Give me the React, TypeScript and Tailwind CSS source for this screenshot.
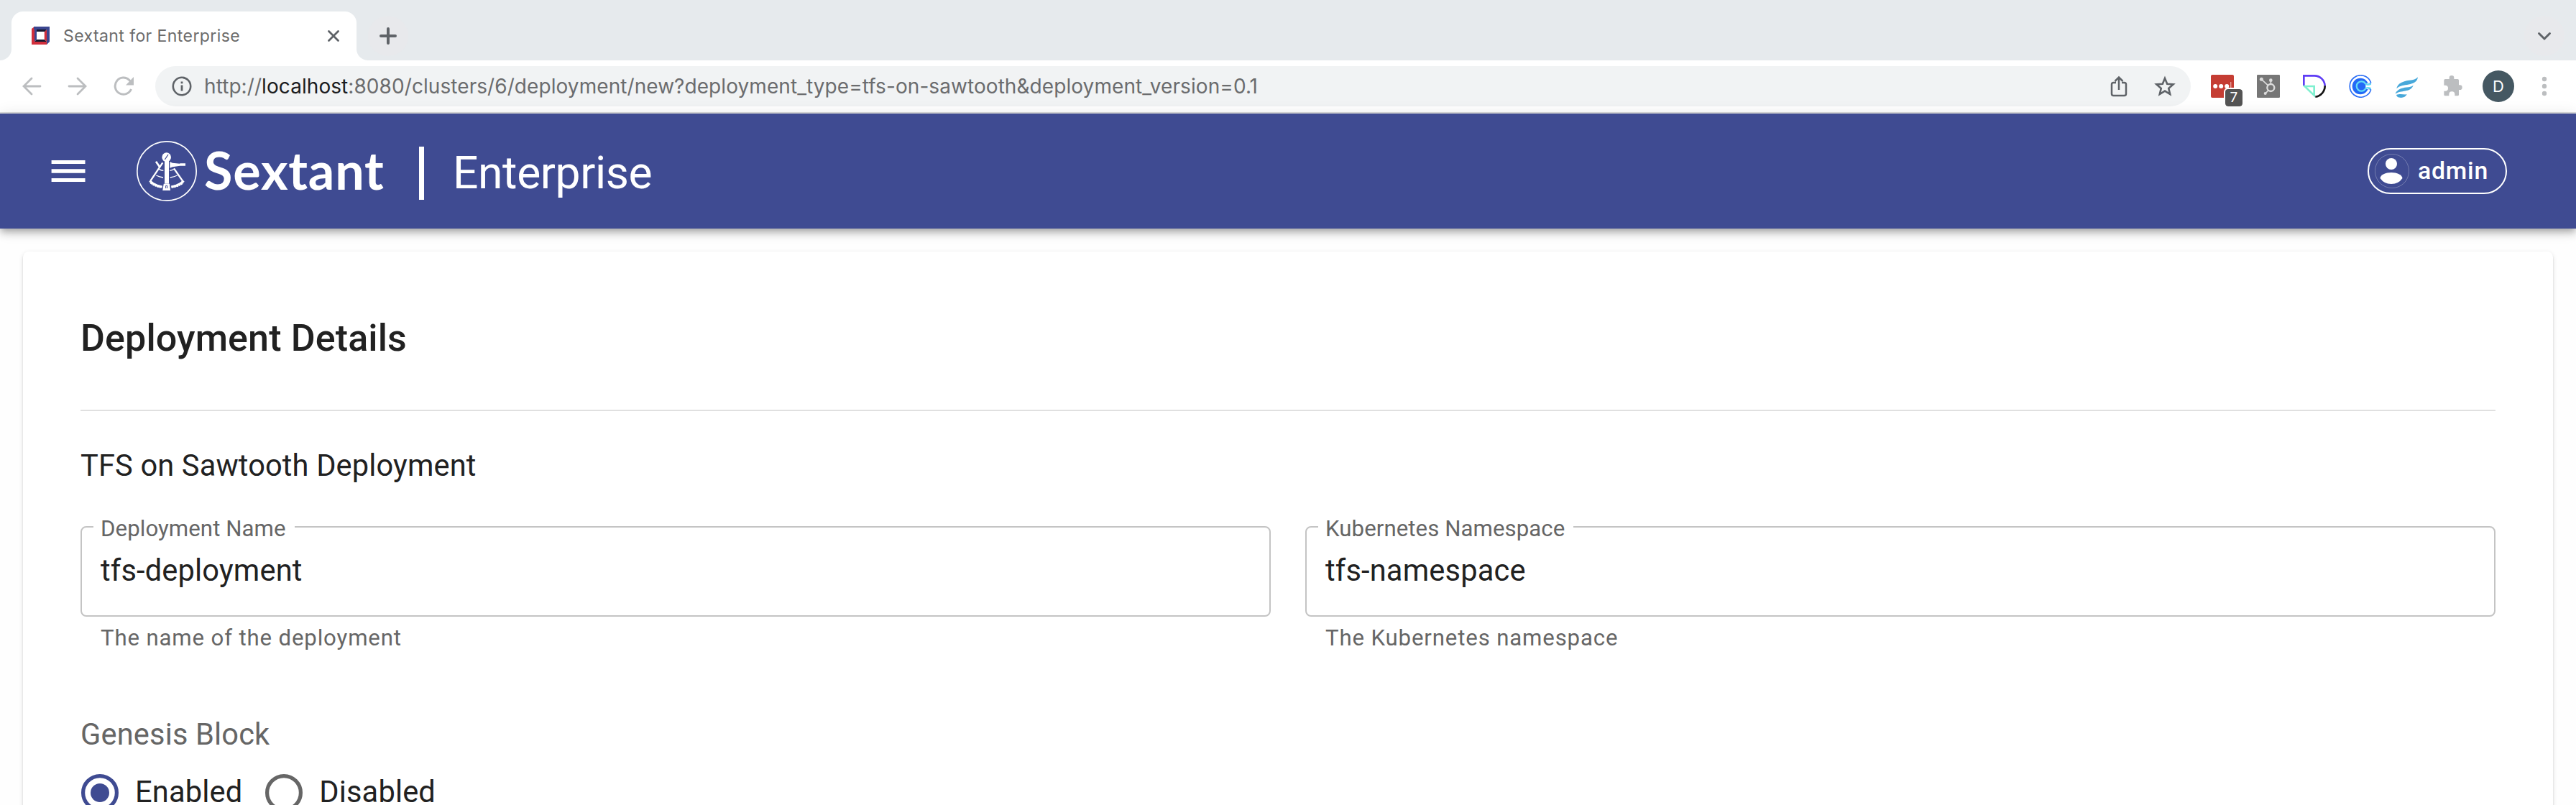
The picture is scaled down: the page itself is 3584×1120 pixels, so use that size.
import React from "react";

function BrowserTabs() {
  return (
    <div className="flex h-[84px] bg-[#e6eaed]">
      <div className="w-4 bg-white">
        <div className="h-full w-4 rounded-br-[16px] bg-[#e6eaed]" />
      </div>
      <div className="h-full w-[480px] pt-4">
        <div className="flex h-[68px] items-center rounded-t-[16px] bg-white pl-7 pr-6">
          <svg className="h-[26px] w-[26px]" viewBox="0 0 26 26">
            <path d="M0 3 4 0V21H21V25H0z" fill="#d12f3c" />
            <path d="M3 0H25V21L21 25V4H3z" fill="#3b4690" />
            <path d="M4 4H7V18L4 21z" fill="#3b4690" />
            <path d="M21 4V21L17.500 18V7z" fill="#d12f3c" />
            <path d="M7 4H21L18 7H7zM7 18H17.500L21 21H4z" fill="#15172e" />
            <path d="M7 7H17.500V18H7z" fill="#fff" />
          </svg>
          <span className="ml-[18px] whitespace-nowrap text-[23px] tracking-[0.42px] text-[#6b6b6b]">
            Sextant for Enterprise
          </span>
          <svg className="ml-auto h-4 w-4" viewBox="0 0 16 16" stroke="#5f6368" strokeWidth="2.8" strokeLinecap="round">
            <path d="M1.5 1.5 14.5 14.5M14.5 1.5 1.5 14.5" />
          </svg>
        </div>
      </div>
      <div className="w-4 bg-white">
        <div className="h-full w-4 rounded-bl-[16px] bg-[#e6eaed]" />
      </div>
      <div className="mt-[22px] flex h-14 w-14 items-center justify-center rounded-full bg-[#e8e9ec]">
        <svg className="h-6 w-6" viewBox="0 0 24 24" stroke="#5f6368" strokeWidth="4" strokeLinecap="round">
          <path d="M12 2V22M2 12H22" />
        </svg>
      </div>
      <div className="ml-auto mr-4 mt-[22px] flex h-14 w-14 items-center justify-center rounded-full bg-[#e8e9ec]">
        <svg className="h-5 w-5" viewBox="0 0 20 20" fill="none" stroke="#5f6368" strokeWidth="3" strokeLinecap="round">
          <path d="M2.5 6.5 10 14 17.5 6.5" />
        </svg>
      </div>
    </div>
  );
}

function Extensions() {
  return (
    <div className="ml-7 flex items-center gap-8">
      <div className="relative h-8 w-8">
        <svg className="h-8 w-8" viewBox="0 0 32 32">
          <rect width="32" height="32" rx="2" fill="#c53d33" />
          <circle cx="6.2" cy="16" r="3" fill="#fff" />
          <circle cx="14.2" cy="16" r="3" fill="#fff" />
          <circle cx="22.2" cy="16" r="3" fill="#fff" />
          <path d="M27.8 10V20" stroke="#f0c4c0" strokeWidth="1" />
        </svg>
        <span className="absolute left-5 top-5 flex h-6 w-6 items-center justify-center rounded-[4px] bg-[#545454] text-[19px] leading-6 text-white outline-2 outline-white">
          7
        </span>
      </div>
      <svg className="h-8 w-8" viewBox="0 0 96 96" fill="none" stroke="#dcdcdc">
        <rect width="96" height="96" rx="4" fill="#767676" stroke="none" />
        <circle cx="58" cy="54" r="15" strokeWidth="7" />
        <path d="M58 39V24M46 44 20 20M48 65 36 78" strokeWidth="5" />
        <g fill="#dcdcdc" stroke="none">
          <circle cx="58" cy="23" r="7" />
          <circle cx="19" cy="19" r="7.5" />
          <circle cx="35" cy="78" r="6" />
        </g>
      </svg>
      <svg className="h-8 w-8" viewBox="0 0 96 96" fill="none" strokeWidth="8">
        <path d="M4 48V4H48A44 44 0 0 1 92 46" stroke="#5f3df5" />
        <path d="M92 46A46 46 0 0 1 52 92" stroke="#151515" />
        <path d="M7 48H47V86z" stroke="#7ff0d0" />
      </svg>
      <svg className="h-8 w-8" viewBox="0 0 96 96" fill="none">
        <path d="M91 30A45.500 45.500 0 1 0 91 66" stroke="#2a6df5" strokeWidth="5" />
        <path d="M91 30Q94 38 82 38M91 66Q94 58 82 58" stroke="#2a6df5" strokeWidth="5" />
        <circle cx="48" cy="48" r="34" fill="#2369f6" />
        <path d="M80 36H70V60H80L94 48z" fill="#fff" />
        <path d="M92 38Q76 46 69 37A20 20 0 1 0 69 59Q76 50 92 58" stroke="#63dcf5" strokeWidth="7" />
      </svg>
      <svg className="h-8 w-8" viewBox="0 0 96 96" fill="#47a8da">
        <path d="M96 10C80 28 60 18 28 32Q10 40 7 58C30 34 90 52 96 10z" />
        <path d="M77 44C62 56 40 48 16 62Q4 70 2 80C24 62 66 76 77 44z" />
        <path d="M50 82C36 84 24 78 6 84Q8 95 22 95.500Q42 97 50 82z" />
      </svg>
      <svg className="h-8 w-8" viewBox="0 0 96 96" fill="#bcbec0">
        <path d="M18 18H35V13A10 10 0 0 1 55 13V18H70A5 5 0 0 1 75 23V43H79A10 10 0 0 1 79 63H75V83A5 5 0 0 1 70 88H58V82A12 12 0 0 0 34 82V88H18A5 5 0 0 1 13 83V68H18A12 12 0 0 0 18 44H13V23A5 5 0 0 1 18 18z" />
      </svg>
      <div className="-ml-[6px] flex h-11 w-11 items-center justify-center rounded-full bg-[#455862] text-[22px] text-white">
        D
      </div>
      <svg className="ml-[6px] h-7 w-2" viewBox="0 0 8 28" fill="#bcbec0">
        <circle cx="4" cy="4" r="3.200" />
        <circle cx="4" cy="14" r="3.200" />
        <circle cx="4" cy="24" r="3.200" />
      </svg>
    </div>
  );
}

function Toolbar() {
  return (
    <div className="flex h-[74px] items-center border-b-2 border-[#dcdddd] bg-white pl-[30px]">
      <svg className="h-7 w-7" viewBox="0 0 28 28" fill="none" stroke="#bcbec0" strokeWidth="2.800" strokeLinecap="round">
        <path d="M26 14H3M14 3 3 14 14 25" />
      </svg>
      <svg className="ml-9 h-7 w-7" viewBox="0 0 28 28" fill="none" stroke="#bcbec0" strokeWidth="2.800" strokeLinecap="round">
        <path d="M2 14H25M14 3 25 14 14 25" />
      </svg>
      <svg className="ml-9 h-7 w-7" viewBox="0 0 28 28" fill="none" stroke="#bcbec0" strokeWidth="3">
        <path d="M24.500 18A11.600 11.600 0 1 1 22 5.500L24 8" />
        <path d="M28 1V12.500H17z" fill="#bcbec0" stroke="none" />
      </svg>
      <div className="ml-[30px] flex h-14 w-[2832px] items-center rounded-full bg-[#f1f3f4] pl-[23px] pr-[21px]">
        <svg className="h-7 w-7" viewBox="0 0 28 28" fill="none" stroke="#5f6368">
          <circle cx="14" cy="14" r="12.200" strokeWidth="2.600" />
          <path d="M14 12.500V20.500M14 7.500V10.300" strokeWidth="2.800" />
        </svg>
        <p className="ml-[17px] whitespace-nowrap text-[28px] tracking-[0.07px] text-[#6b6c6e]">
          http://<span className="text-[#1b1c1e]">localhost</span>
          :8080/clusters/6/deployment/new?deployment_type=tfs-on-sawtooth&amp;deployment_version=0.1
        </p>
        <svg className="ml-auto h-[30px] w-6" viewBox="0 0 24 30" fill="none" stroke="#5f6368" strokeWidth="2.500">
          <path d="M8 10H4.500A2.500 2.500 0 0 0 2 12.500V25.500A2.500 2.500 0 0 0 4.500 28H19.500A2.500 2.500 0 0 0 22 25.500V12.500A2.500 2.500 0 0 0 19.500 10H16M12 20V3M6.500 8 12 2.500 17.500 8" />
        </svg>
        <svg className="ml-[37px] h-[30px] w-[30px]" viewBox="0 0 30 30" fill="none" stroke="#5f6368" strokeWidth="2.600">
          <path d="M15 4 18.200 11.800 26.600 12.400 20.200 17.900 22.200 26 15 21.600 7.800 26 9.800 17.900 3.400 12.400 11.800 11.800z" />
        </svg>
      </div>
      <Extensions />
    </div>
  );
}

function SextantMark() {
  return (
    <svg className="ml-[71px] h-[84px] w-[84px]" viewBox="390 47 252 252" fill="none" stroke="#fff">
      <circle cx="516" cy="173" r="123.500" strokeWidth="5" />
      <path d="M499 138 448 214" strokeWidth="7" />
      <path d="M471 133 488 158" strokeWidth="8" />
      <path d="M546 162 582 214" strokeWidth="7" />
      <path d="M484 165Q492 170 502 171M472 191Q486 198 501 200M529 171Q541 169 548 164M530 200Q548 197 560 191" strokeWidth="4" />
      <path d="M445 214Q466 234 497 239M535 239Q566 234 587 214" strokeWidth="9" />
      <path d="M449 221Q470 237 496 239M536 239Q562 237 583 221" strokeWidth="10" strokeDasharray="8 2" />
      <g fill="#fff" stroke="none">
        <circle cx="515" cy="115" r="19" />
        <path d="M507 130H525V226H507z" />
        <path d="M529 134 540 139 571 142V141H594V151H571L540 156 529 160z" />
      </g>
      <path d="M505 228H526L529 252H501z" strokeWidth="4" fill="#fff" />
      <path d="M512 245V234H518V245" stroke="#3f4b92" strokeWidth="3" />
      <path d="M508 125 522 104" stroke="#3f4b92" strokeWidth="4" />
    </svg>
  );
}

function AppHeader() {
  return (
    <header className="relative z-10 flex h-40 items-center bg-[#3f4b92] pl-[71px] pr-24 font-['Roboto',sans-serif] text-white shadow-[0_4px_8px_-2px_rgba(0,0,0,0.2),0_8px_10px_0_rgba(0,0,0,0.14),0_2px_20px_0_rgba(0,0,0,0.12)]">
      <svg className="h-[30px] w-12" viewBox="0 0 48 30" fill="#fff">
        <path d="M.6 0H47.500V5H.6zM.6 12.300H47.500V17.700H.6zM.6 25H47.500V30H.6z" />
      </svg>
      <SextantMark />
      <span className="-mt-1 ml-[10px] w-[249px] whitespace-nowrap font-['Lato',sans-serif] text-[72px] font-bold leading-[80px] tracking-[0.8px]">
        Sextant
      </span>
      <div className="ml-[50px] mt-[5px] h-[74px] w-[7px] bg-white" />
      <span className="ml-10 mt-[5px] text-[62.4px] leading-[80px] tracking-[-0.4px]">Enterprise</span>
      <div className="ml-auto flex h-16 w-[194px] items-center rounded-full border-2 border-white pl-2">
        <svg className="h-12 w-12" viewBox="0 0 48 48">
          <circle cx="24" cy="24" r="23.600" fill="none" stroke="#fff" strokeOpacity="0.35" strokeWidth="0.800" />
          <circle cx="23" cy="14" r="8" fill="#fff" />
          <path d="M7.500 34C8 29 15 26 23 26S38 29 38.500 34Q33 42 23 42T7.500 34z" fill="#fff" />
        </svg>
        <span className="-mt-px ml-3 text-[33.8px] font-medium leading-[40px] tracking-[0.8px]">admin</span>
      </div>
    </header>
  );
}

function Field({ label, value, helper }: { label: string; value: string; helper: string }) {
  return (
    <div className="w-[1656px]">
      <div className="relative h-[126px] rounded-[8px] border-2 border-[#c4c4c4] pl-[26px] pt-[35px]">
        <span className="absolute -top-[14px] left-4 whitespace-nowrap bg-white pl-[10px] pr-3 text-[31.2px] leading-8 tracking-[0.07px] text-[#666]">
          {label}
        </span>
        <p className="text-[41.6px] leading-[50px] tracking-[0.17px]">{value}</p>
      </div>
      <p className="mt-[14px] pl-7 text-[31.2px] leading-8 tracking-[0.85px] text-[#666]">{helper}</p>
    </div>
  );
}

function Radio({ label, checked }: { label: string; checked?: boolean }) {
  return (
    <label className="flex items-start">
      <svg className="h-[52px] w-[52px]" viewBox="0 0 52 52">
        <circle cx="26" cy="26" r="23.400" fill="none" stroke={checked ? "#3f4b92" : "#666"} strokeWidth="5.200" />
        {checked && <circle cx="26" cy="26" r="13" fill="#3f4b92" />}
      </svg>
      <span className="ml-[23px] text-[41.6px] leading-[50px] tracking-[0.15px]">{label}</span>
    </label>
  );
}

function DeploymentForm() {
  return (
    <section className="mx-8 mt-8 h-[900px] rounded-[8px] bg-white px-20 pt-[79px] font-['Roboto',sans-serif] text-[#212121] shadow-[0_4px_2px_-2px_rgba(0,0,0,0.2),0_2px_2px_0_rgba(0,0,0,0.14),0_2px_6px_0_rgba(0,0,0,0.12)]">
      <h1 className="text-[52px] font-medium leading-[84px] tracking-[0.13px]">Deployment Details</h1>
      <hr className="mt-[57px] border-t-2 border-[#e0e0e0]" />
      <h2 className="mt-[45px] text-[41.6px] leading-[62px] tracking-[0.14px]">TFS on Sawtooth Deployment</h2>
      <div className="mt-[53px] flex justify-between">
        <Field label="Deployment Name" value="tfs-deployment" helper="The name of the deployment" />
        <Field label="Kubernetes Namespace" value="tfs-namespace" helper="The Kubernetes namespace" />
      </div>
      <p className="mt-[93px] text-[41.6px] leading-[50px] tracking-[0.15px] text-[#666]">Genesis Block</p>
      <div className="ml-px mt-[30px] flex gap-8">
        <Radio label="Enabled" checked />
        <Radio label="Disabled" />
      </div>
    </section>
  );
}

export default function App() {
  return (
    <div className="h-[1120px] w-[3584px] overflow-hidden bg-[#fefefe] font-['Inter','Liberation_Sans',sans-serif]">
      <BrowserTabs />
      <Toolbar />
      <AppHeader />
      <DeploymentForm />
    </div>
  );
}
